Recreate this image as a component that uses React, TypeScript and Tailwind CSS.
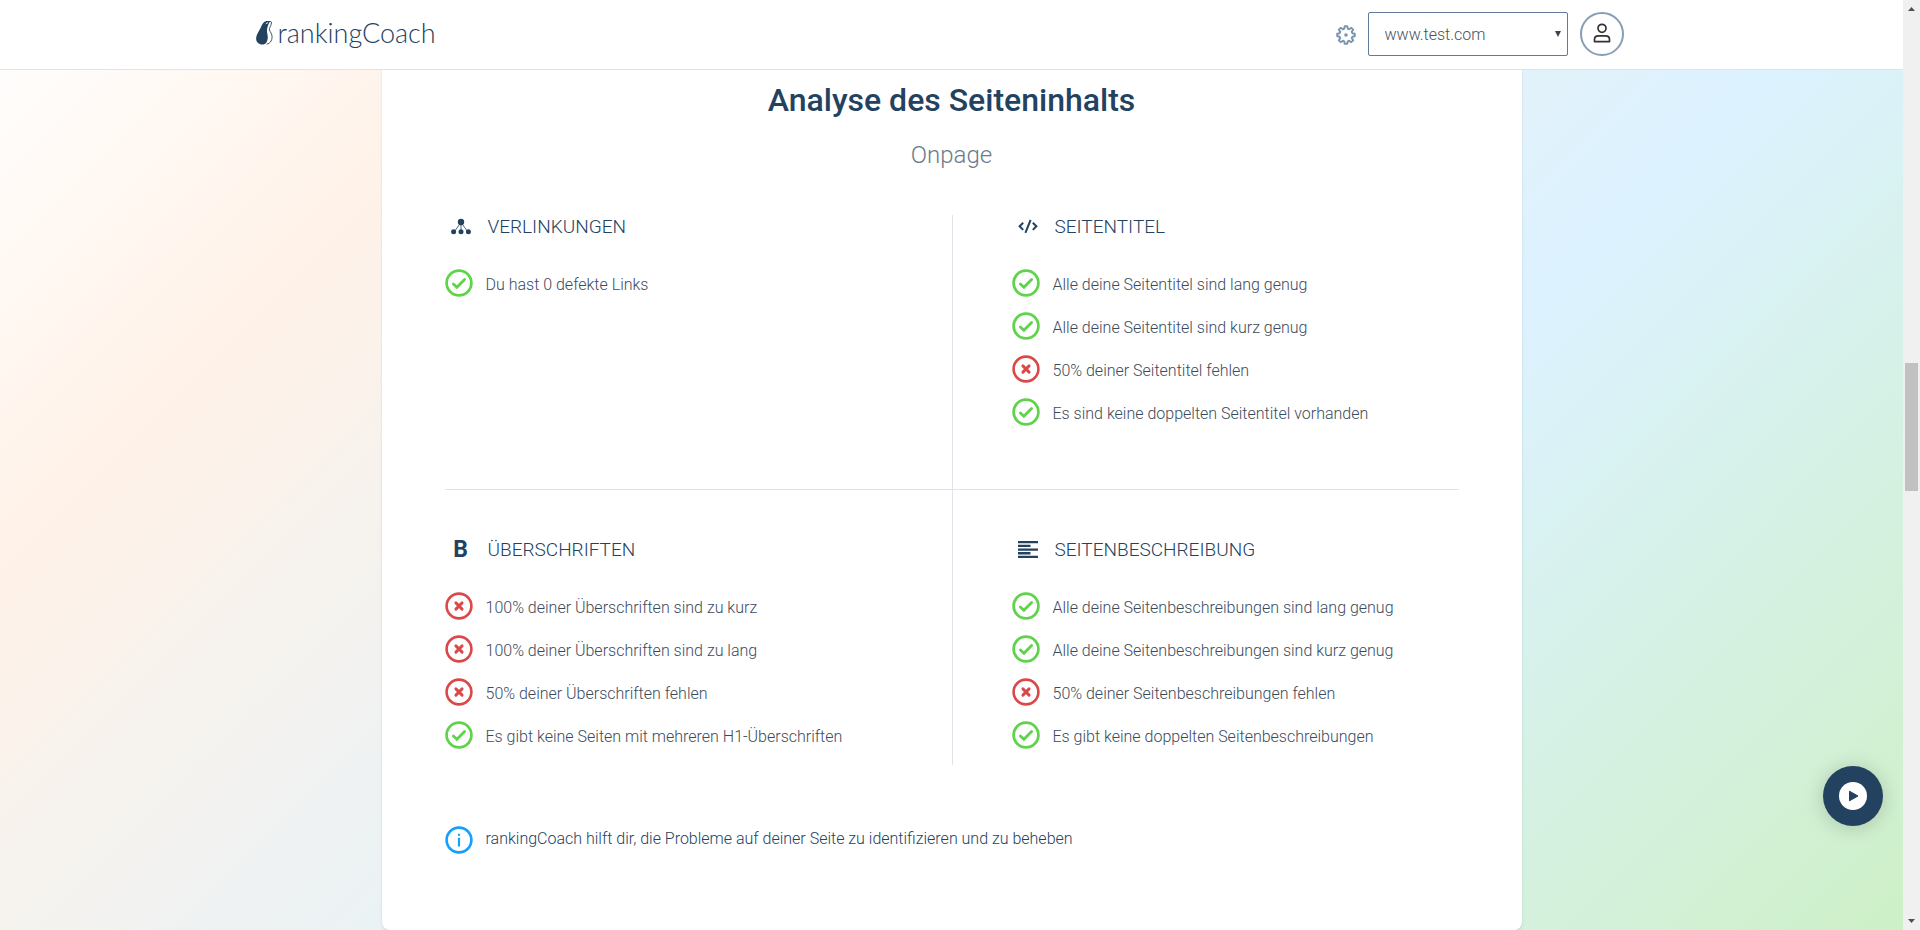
import React from "react";

type Check = { ok: boolean; text: string };

const linkItems: Check[] = [{ ok: true, text: "Du hast 0 defekte Links" }];

const titleItems: Check[] = [
  { ok: true, text: "Alle deine Seitentitel sind lang genug" },
  { ok: true, text: "Alle deine Seitentitel sind kurz genug" },
  { ok: false, text: "50% deiner Seitentitel fehlen" },
  { ok: true, text: "Es sind keine doppelten Seitentitel vorhanden" },
];

const headingItems: Check[] = [
  { ok: false, text: "100% deiner Überschriften sind zu kurz" },
  { ok: false, text: "100% deiner Überschriften sind zu lang" },
  { ok: false, text: "50% deiner Überschriften fehlen" },
  { ok: true, text: "Es gibt keine Seiten mit mehreren H1-Überschriften" },
];

const descriptionItems: Check[] = [
  { ok: true, text: "Alle deine Seitenbeschreibungen sind lang genug" },
  { ok: true, text: "Alle deine Seitenbeschreibungen sind kurz genug" },
  { ok: false, text: "50% deiner Seitenbeschreibungen fehlen" },
  { ok: true, text: "Es gibt keine doppelten Seitenbeschreibungen" },
];

function StatusIcon({ ok }: { ok: boolean }) {
  return ok ? (
    <svg viewBox="0 0 28 28" className="h-7 w-7 shrink-0 text-[#5fd34a]" fill="none" stroke="currentColor" aria-hidden="true">
      <circle cx="14" cy="14" r="12.4" strokeWidth="2.7" />
      <path d="M8.4 14.9l3.5 3.3 7.7-7.8" strokeWidth="2.8" strokeLinecap="round" />
    </svg>
  ) : (
    <svg viewBox="0 0 28 28" className="h-7 w-7 shrink-0 text-[#db4848]" fill="none" stroke="currentColor" aria-hidden="true">
      <circle cx="14" cy="14" r="12.4" strokeWidth="2.6" />
      <path d="M10.9 10.9l6.200 6.200M17.100 10.900l-6.200 6.200" strokeWidth="2.9" strokeLinecap="round" />
    </svg>
  );
}

function Section({ icon, title, items, className }: { icon: React.ReactNode; title: string; items: Check[]; className: string }) {
  return (
    <section className={className}>
      <h2 className="flex h-6 items-center text-[19px] leading-6 font-light text-[#23425f]">
        <span className="mr-[11px] flex w-8 justify-center">{icon}</span>
        {title}
      </h2>
      <ul className="mt-[30px] flex flex-col gap-[15px]">
        {items.map((item) => (
          <li key={item.text} className="flex h-7 items-center gap-[13px]">
            <StatusIcon ok={item.ok} />
            <span className="pt-1 text-base leading-6 font-light text-[#3c4b5c]">{item.text}</span>
          </li>
        ))}
      </ul>
    </section>
  );
}

function NetworkIcon() {
  return (
    <svg viewBox="0 0 20 18" className="h-[18px] w-5" fill="#23425f" stroke="#23425f" aria-hidden="true">
      <path d="M10 4.5L3 14M10 4.5V14M10 4.5L17 14" strokeWidth=".8" fill="none" />
      <circle cx="10" cy="4" r="3.2" stroke="none" />
      <circle cx="2.6" cy="13.8" r="2.5" stroke="none" />
      <circle cx="10" cy="13.8" r="2.5" stroke="none" />
      <circle cx="17.4" cy="13.8" r="2.5" stroke="none" />
    </svg>
  );
}

function CodeIcon() {
  return (
    <svg viewBox="0 0 20 18" className="h-[18px] w-5" fill="none" stroke="#23425f" strokeWidth="2" aria-hidden="true">
      <path d="M5.200 4.700L1.600 8.300l3.600 3.600M14.800 4.700l3.600 3.600-3.600 3.600M12.600 2L7.400 14.800" />
    </svg>
  );
}

function LinesIcon() {
  return (
    <svg viewBox="0 0 20 18" className="h-[18px] w-5" fill="#23425f" aria-hidden="true">
      <path d="M0 0h20v2.300H0zM0 3.700h12.500V6H0zM0 7.400h20v2.300H0zM0 11.100h12.500v2.300H0zM0 14.700h20V17H0z" />
    </svg>
  );
}

function Header() {
  return (
    <header className="h-[70px] shrink-0 border-b border-[#dfe4ea] bg-white">
      <div className="mx-auto flex h-full max-w-[1400px] items-center justify-between pr-7 pb-0.5 pl-1">
        <a href="#" className="flex items-center gap-[5px] pb-0.5 text-[#23425f]">
          <svg viewBox="0 0 17 24" className="h-6 w-[17px]" aria-hidden="true">
            <path d="M8.5.8C10 0 12.500-.2 14 .3c-.6 1.200-1.700 3.200-2.300 5.200-.7 2.500-1 4.200-.5 6.500.4 2.300.9 4.200.3 6.600-.5 2.200-1.200 4.100-3.300 4.700C4.600 24 .8 22.500.2 18.500c-.5-3.600 1.900-6.800 3.700-10.200C5.200 5.800 6.200 2.300 8.500.8z" fill="#23425f" />
            <path d="M10 .6c2-.5 4.300-.4 5.200.2.9 1.200-.6 4.200-1.700 6.600-.9 2.200 1.800 3.700 2.400 6.800.7 4-1 8.300-5.200 8.900" fill="none" stroke="#23425f" strokeWidth=".9" />
            <path d="M9.800 2.700l2.300-1" stroke="#fff" strokeWidth=".9" />
          </svg>
          <span className="font-[Lato,sans-serif] text-[27px] leading-8 font-light">rankingCoach</span>
        </a>
        <div className="flex items-center gap-3">
          <button type="button" aria-label="Einstellungen" className="mt-0.5 text-[#7b95ae]">
            <svg viewBox="0 0 20 20" className="h-5 w-5" fill="none" stroke="currentColor" strokeWidth="1.9" strokeLinejoin="round" aria-hidden="true">
              <path d="M8.700 1.200h2.600l.5 2.500 1.300.6 2.200-1.500 1.900 1.900-1.500 2.200.6 1.300 2.500.5v2.600l-2.500.5-.6 1.300 1.500 2.200-1.900 1.900-2.200-1.500-1.300.6-.5 2.500H8.700l-.5-2.500-1.300-.6-2.200 1.500-1.900-1.900 1.500-2.200-.6-1.300-2.500-.5V8.700l2.500-.5.600-1.300-1.500-2.200 1.900-1.900 2.200 1.500 1.300-.6z" />
              <circle cx="10" cy="10" r="1.800" fill="currentColor" stroke="none" />
            </svg>
          </button>
          <div className="relative">
            <select aria-label="Website" defaultValue="www.test.com" className="block h-11 w-[200px] appearance-none rounded-xs border border-[#5f7b95] bg-white px-4 pt-0.5 text-base font-light text-[#46515f]">
              <option>www.test.com</option>
            </select>
            <svg viewBox="0 0 6 6" className="pointer-events-none absolute top-[19px] right-[7px] h-1.5 w-1.5" fill="#3c4450" aria-hidden="true">
              <path d="M0 0h6L3 6z" />
            </svg>
          </div>
          <button type="button" aria-label="Benutzerkonto" className="flex h-11 w-11 items-center justify-center rounded-full border-2 border-[#869db3] pb-0.5 text-[#333]">
            <svg viewBox="0 0 18 20" className="h-5 w-[18px]" fill="none" stroke="currentColor" strokeWidth="1.700" aria-hidden="true">
              <circle cx="9" cy="5.300" r="4" />
              <path d="M1.500 18.600v-2.200c0-2.200 1.800-3.600 4-3.600h7c2.200 0 4 1.400 4 3.600v2.200z" strokeLinejoin="round" />
            </svg>
          </button>
        </div>
      </div>
    </header>
  );
}

function ScrollTrack() {
  return (
    <div aria-hidden="true" className="flex w-[17px] shrink-0 flex-col items-center justify-between bg-[#f0f0f0] py-[7px]">
      <svg viewBox="0 0 7 4" className="h-1 w-[7px]" fill="#505050"><path d="M0 4L3.500 0 7 4z" /></svg>
      <div className="flex w-full flex-1 flex-col px-0.5">
        <div className="grow-[352]" />
        <div className="h-[128px] bg-[#c1c1c1]" />
        <div className="grow-[428]" />
      </div>
      <svg viewBox="0 0 7 4" className="h-1 w-[7px]" fill="#505050"><path d="M0 0h7L3.500 4z" /></svg>
    </div>
  );
}

export default function App() {
  return (
    <div className="flex h-screen overflow-hidden font-[Roboto,sans-serif]">
      <div className="relative flex min-w-0 flex-1 flex-col bg-[linear-gradient(135deg,#ffffff_0%,#fff2e8_20%,#dcf2ff_65%,#cef0c7_100%)]">
        <Header />
        <main className="mx-auto w-full max-w-[1140px] rounded-b-lg bg-white px-[63px] pt-3 pb-[76px] shadow-sm">
          <h1 className="text-center text-[32px] leading-9 font-medium text-[#23425f]">Analyse des Seiteninhalts</h1>
          <p className="mt-[21px] text-center text-2xl leading-8 font-light text-[#6b7a89]">Onpage</p>
          <div className="mt-11 grid grid-cols-2">
            <Section className="min-h-[275px] border-b border-[#dfe4ea]" icon={<NetworkIcon />} title="VERLINKUNGEN" items={linkItems} />
            <Section className="min-h-[275px] border-b border-l border-[#dfe4ea] pl-[59px]" icon={<CodeIcon />} title="SEITENTITEL" items={titleItems} />
            <Section
              className="min-h-[275px] pt-12"
              icon={<span aria-hidden="true" className="text-[23px] font-bold">B</span>}
              title="ÜBERSCHRIFTEN"
              items={headingItems}
            />
            <Section className="min-h-[275px] border-l border-[#dfe4ea] pt-12 pl-[59px]" icon={<LinesIcon />} title="SEITENBESCHREIBUNG" items={descriptionItems} />
          </div>
          <div className="mt-[61px] flex items-center gap-[13px]">
            <svg viewBox="0 0 28 28" className="h-7 w-7 shrink-0 text-[#14a0ff]" fill="none" stroke="currentColor" aria-hidden="true">
              <circle cx="14" cy="14" r="12.400" strokeWidth="2.600" />
              <path d="M14 11.800v8.600M14 7.700v2" strokeWidth="2.200" />
            </svg>
            <p className="pb-0.5 text-base leading-6 font-light text-[#23425f]">
              rankingCoach hilft dir, die Probleme auf deiner Seite zu identifizieren und zu beheben
            </p>
          </div>
        </main>
        <button type="button" aria-label="Video abspielen" className="absolute right-5 bottom-[104px] flex h-[60px] w-[60px] items-center justify-center rounded-full bg-[#23425f] shadow-[0_2px_20px_rgba(0,0,0,0.18)]">
          <svg viewBox="0 0 28 28" className="h-7 w-7" aria-hidden="true">
            <circle cx="14" cy="14" r="14" fill="#fff" />
            <path d="M10.500 9.200v9.600l8.500-4.800z" fill="#23425f" stroke="#23425f" strokeWidth="1" strokeLinejoin="round" />
          </svg>
        </button>
      </div>
      <ScrollTrack />
    </div>
  );
}
